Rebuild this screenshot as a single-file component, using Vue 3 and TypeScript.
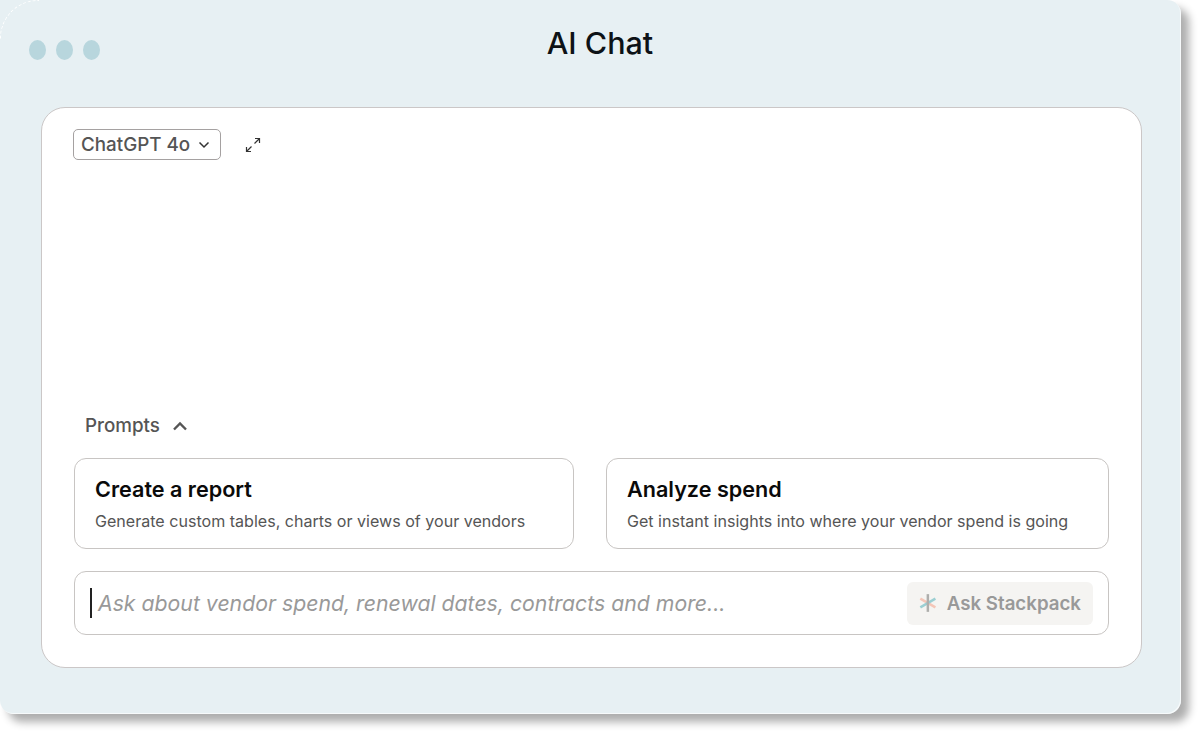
<template>
  <div class="page">
    <div class="window">
      <header class="titlebar">
        <div class="dots">
          <span v-for="n in 3" :key="n" class="dot"></span>
        </div>
        <h1 class="title">AI Chat</h1>
      </header>

      <main class="panel">
        <div class="toolbar">
          <button class="model-select">
            <span>ChatGPT 4o</span>
            <svg width="12" height="8" viewBox="0 0 12 8" fill="none">
              <path d="M1.5 1.5 6 6l4.500-4.500" stroke="#333" stroke-width="1.500" />
            </svg>
          </button>
          <svg class="expand" width="16" height="16" viewBox="0 0 16 16" fill="none" stroke="#333" stroke-width="1.200">
            <path d="M9.500 6.500 14.500 1.500M10 1.500h4.500V6" />
            <path d="M6.500 9.500 1.500 14.500M1.500 10v4.500H6" />
          </svg>
        </div>

        <div class="spacer"></div>

        <div class="prompts-head">
          <span>Prompts</span>
          <svg width="16" height="10" viewBox="0 0 16 10" fill="none">
            <path d="M2 8.500 8 2.500l6 6" stroke="#555" stroke-width="2.400" />
          </svg>
        </div>

        <div class="prompt-grid">
          <div v-for="p in prompts" :key="p.title" class="prompt-card">
            <div class="prompt-title">{{ p.title }}</div>
            <div class="prompt-desc">{{ p.desc }}</div>
          </div>
        </div>

        <div class="ask-box">
          <span class="caret"></span>
          <span class="placeholder">Ask about vendor spend, renewal dates, contracts and more...</span>
          <button class="ask-btn">
            <svg width="20" height="22" viewBox="0 0 20 22" fill="none" stroke-width="2.800">
              <path d="M1.500 6l17 10" stroke="#f4c6b8" />
              <path d="M1.500 16l17-10" stroke="#9ccfd3" />
              <path d="M10 1v20" stroke="#aeaeac" />
            </svg>
            <span>Ask Stackpack</span>
          </button>
        </div>
      </main>
    </div>
  </div>
</template>

<script setup lang="ts">
interface Prompt {
  title: string
  desc: string
}

const prompts: Prompt[] = [
  { title: 'Create a report', desc: 'Generate custom tables, charts or views of your vendors' },
  { title: 'Analyze spend', desc: 'Get instant insights into where your vendor spend is going' }
]
</script>

<style scoped>
.page {
  width: 1200px;
  height: 733px;
  overflow: hidden;
  background: #fff;
  font-family: Inter, "Liberation Sans", sans-serif;
}

.window {
  position: relative;
  width: 1181px;
  height: 714px;
  box-sizing: border-box;
  padding: 0 39px 46px 41px;
  display: flex;
  flex-direction: column;
  background: #e7f0f3;
  border-radius: 0 14px 14px 14px;
  box-shadow: inset -1px -1px 0 #f7fafb, 8px 8px 8px rgba(0, 0, 0, 0.32);
}

/* faint white arc left over in the top left corner */
.window::before {
  content: "";
  position: absolute;
  top: 0;
  left: 0;
  width: 38px;
  height: 38px;
  border-top: 1px dashed #fff;
  border-left: 1px dashed #fff;
  border-top-left-radius: 38px;
}

.titlebar {
  position: relative;
  height: 107px;
  flex: none;
  display: flex;
  justify-content: center;
  padding-left: 17px;
}

.dots {
  position: absolute;
  left: -12px;
  top: 40px;
  display: flex;
  gap: 10px;
}

.dot {
  width: 17px;
  height: 20px;
  border-radius: 50%;
  background: #b8d6dd;
}

.title {
  margin: 24px 0 0;
  font-size: 30.500px;
  line-height: 38px;
  font-weight: 500;
  color: #0d1216;
}

.panel {
  flex: 1;
  display: flex;
  flex-direction: column;
  box-sizing: border-box;
  padding: 21px 32px 32px;
  background: #fff;
  border: 1px solid #cbc7c7;
  border-radius: 24px;
}

.toolbar {
  display: flex;
  align-items: center;
  gap: 24px;
  margin-left: -1px;
}

.model-select {
  display: flex;
  align-items: center;
  gap: 8px;
  height: 31px;
  width: 148px;
  box-sizing: border-box;
  padding: 0 7px;
  background: #fff;
  border: 1px solid #a5a1a1;
  border-radius: 5px;
  font: 500 18.800px Inter, sans-serif;
  color: #555;
}

.expand {
  flex: none;
}

.spacer {
  flex: 1;
}

.prompts-head {
  display: flex;
  align-items: center;
  gap: 12px;
  padding-left: 11px;
  font-size: 18.800px;
  font-weight: 500;
  line-height: 22px;
  color: #555;
}

.prompt-grid {
  display: grid;
  grid-template-columns: 500px 503px;
  gap: 32px;
  margin-top: 21px;
}

.prompt-card {
  height: 91px;
  box-sizing: border-box;
  padding: 17px 20px;
  border: 1px solid #c8c5c3;
  border-radius: 12px;
}

.prompt-title {
  font-size: 21.600px;
  line-height: 26px;
  font-weight: 600;
  color: #0a0a0a;
}

.prompt-desc {
  margin-top: 9px;
  font-size: 16.070px;
  line-height: 20px;
  color: #555;
}

.ask-box {
  display: flex;
  align-items: center;
  height: 64px;
  margin-top: 22px;
  box-sizing: border-box;
  padding: 0 15px;
  border: 1px solid #c8c5c3;
  border-radius: 12px;
}

.caret {
  flex: none;
  width: 2px;
  height: 30px;
  margin-right: 6px;
  background: #222;
}

.placeholder {
  flex: 1;
  font-size: 21.250px;
  font-style: italic;
  color: #999;
}

.ask-btn {
  display: flex;
  align-items: center;
  gap: 10px;
  flex: none;
  width: 186px;
  height: 43px;
  box-sizing: border-box;
  padding: 0 12px;
  border: none;
  border-radius: 6px;
  background: #f5f4f2;
  font: 600 18.700px Inter, sans-serif;
  color: #999;
  white-space: nowrap;
}
</style>
